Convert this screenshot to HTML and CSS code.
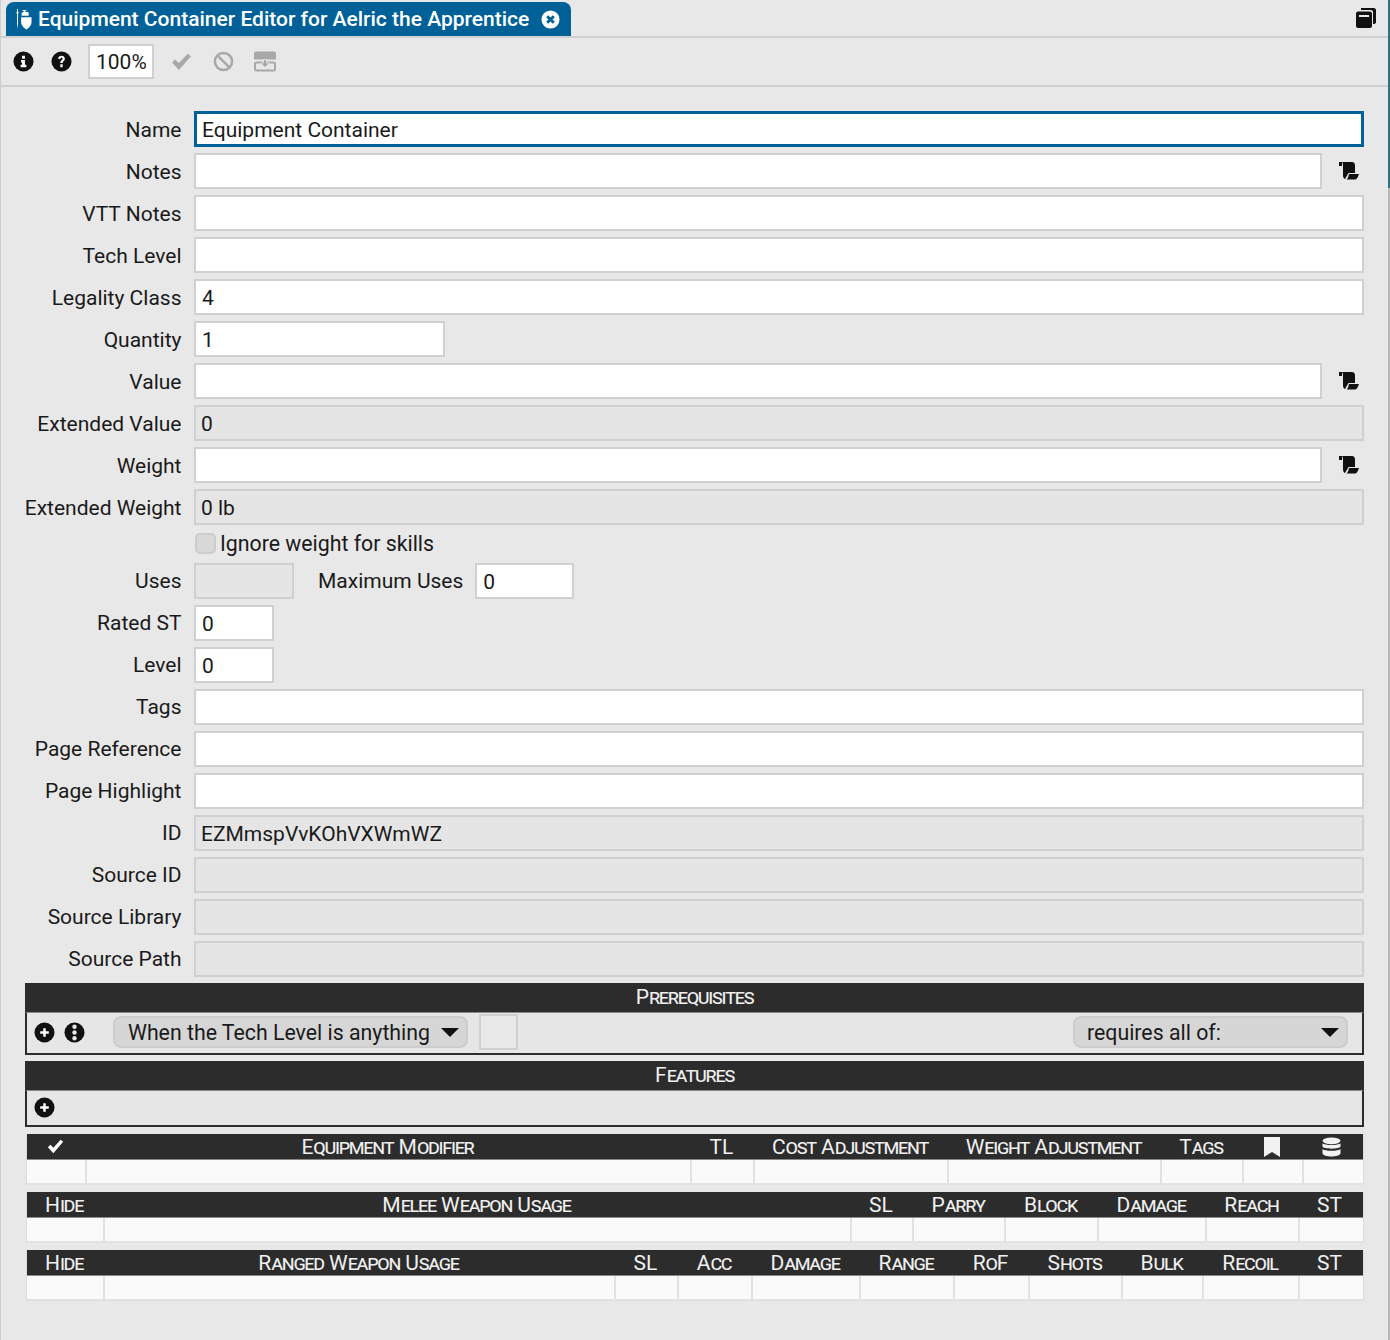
FILE: index.html
```html
<!DOCTYPE html>
<html lang="en">
<head>
    <meta charset="UTF-8">
    <title>Equipment Container Editor</title>
    <link rel="stylesheet" href="styles.css">
</head>
<body>
    <svg class="sprites" width="0" height="0">
        <symbol id="scroll" viewBox="0 0 20 18">
            <path d="M0 0h3v4H0z"/>
            <path d="M3 0h10c2 0 3 1.500 3 3.500V11H9.500L6 17H6.500C4.500 17 4 15 4 13V3C4 1.500 3.500 .5 3 0z"/>
            <path d="M10 12h10l-1 2.500C18.500 16 17.500 17.500 16 17.500H7.500C9 16.500 9.500 14 10 12z"/>
        </symbol>
        <symbol id="plus" viewBox="0 0 22 22">
            <circle cx="11" cy="11" r="10.500"/>
            <path d="M9.700 6.500h2.600v3.200h3.200v2.600h-3.200v3.200H9.700v-3.200H6.500V9.700h3.200z" fill="#fff"/>
        </symbol>
    </svg>

    <div class="edge"></div>

    <div class="tab-bar">
        <div class="tab">
            <svg class="tab-icon" viewBox="0 0 18 22" fill="#fff">
                <path d="M2.200 0h1v3.500h1.300v1H3.200v11l-.5 5.500-.5-5.500v-11H1v-1h1.200z"/>
                <path d="M8 1h4v1h-1.300v1H13c1 0 1.500.5 1.500 1.500V7H7V5c0-1 .5-2 2.300-2V2H8z"/>
                <path d="M6.500 8.500h11v5c0 3.500-2.500 6.500-5.500 8-3-1.500-5.500-4.500-5.500-8z"/>
            </svg>
            <span class="tab-title">Equipment Container Editor for Aelric the Apprentice</span>
            <svg class="tab-close" viewBox="0 0 20 20">
                <circle cx="10" cy="10" r="9.500" fill="#fff"/>
                <path d="M6.500 6.500l7 7m0-7l-7 7" stroke="#006199" stroke-width="3"/>
            </svg>
        </div>
        <svg class="layers" viewBox="0 0 20 20" fill="#111">
            <path d="M5 0h13c1 0 2 1 2 2v12c0 1-1 2-2 2h-1V4c0-1-1-2-2-2H5z"/>
            <path d="M2 3.500h12c1 0 2 1 2 2V18c0 1-1 2-2 2H2c-1 0-2-1-2-2V5.500c0-1 1-2 2-2zM3 7v2h10V7z"/>
        </svg>
    </div>

    <div class="toolbar">
        <svg class="tool-icon" viewBox="0 0 22 22" fill="#111">
            <circle cx="11" cy="11" r="10.500"/>
            <path d="M9.500 5h3v3h-3zM8.500 9.500h4v5H14V17H8v-2.500h1.500V12h-1z" fill="#fff"/>
        </svg>
        <svg class="tool-icon" viewBox="0 0 22 22" fill="#111">
            <circle cx="11" cy="11" r="10.500"/>
            <path d="M7.500 8.500C7.500 6 9 5 11 5s3.500 1 3.500 3.200c0 2.500-2.300 2.500-2.300 4.300H9.800c0-3 2.400-3 2.400-4.300 0-.8-.4-1.200-1.200-1.200s-1.200.5-1.200 1.500zM9.800 14h2.400v3H9.800z" fill="#fff"/>
        </svg>
        <input class="scale-field" value="100%" readonly>
        <svg class="tool-icon dim" viewBox="0 0 20 20" fill="#a8a8a8">
            <path d="M1 11l3-3 3.500 3.500L16 2.500l3 2.500L7.500 18z"/>
        </svg>
        <svg class="tool-icon dim" viewBox="0 0 22 22" fill="none" stroke="#a8a8a8" stroke-width="2.600">
            <circle cx="11" cy="11" r="9"/>
            <path d="M4.800 4.800l12.400 12.400"/>
        </svg>
        <svg class="tool-icon dim wide" viewBox="0 0 22 20">
            <path d="M2 0h18c1 0 2 1 2 2v6H0V2c0-1 1-2 2-2z" fill="#a8a8a8"/>
            <rect x="1" y="11" width="20" height="8" rx="1.500" fill="none" stroke="#a8a8a8" stroke-width="2"/>
            <path d="M9.500 8h3v3.500h3L11 16l-4.500-4.500h3z" fill="#a8a8a8" stroke="#e8e8e8" stroke-width=".8"/>
        </svg>
    </div>

    <div class="form">
        <div class="row"><label class="label">Name</label><input class="field focused" value="Equipment Container"></div>
        <div class="row"><label class="label">Notes</label><input class="field"><svg class="scroll-icon"><use href="#scroll"/></svg></div>
        <div class="row"><label class="label">VTT Notes</label><input class="field"></div>
        <div class="row"><label class="label">Tech Level</label><input class="field"></div>
        <div class="row"><label class="label">Legality Class</label><input class="field" value="4"></div>
        <div class="row"><label class="label">Quantity</label><input class="field qty" value="1"></div>
        <div class="row"><label class="label">Value</label><input class="field"><svg class="scroll-icon"><use href="#scroll"/></svg></div>
        <div class="row"><label class="label">Extended Value</label><input class="field off" value="0" readonly></div>
        <div class="row"><label class="label">Weight</label><input class="field"><svg class="scroll-icon"><use href="#scroll"/></svg></div>
        <div class="row"><label class="label">Extended Weight</label><input class="field off" value="0 lb" readonly></div>
        <div class="row check-row"><span class="label"></span><span class="checkbox"></span><span class="check-text">Ignore weight for skills</span></div>
        <div class="row">
            <label class="label">Uses</label>
            <input class="field off uses" readonly>
            <label class="label-inline">Maximum Uses</label>
            <input class="field uses" value="0">
        </div>
        <div class="row"><label class="label">Rated ST</label><input class="field small" value="0"></div>
        <div class="row"><label class="label">Level</label><input class="field small" value="0"></div>
        <div class="row"><label class="label">Tags</label><input class="field"></div>
        <div class="row"><label class="label">Page Reference</label><input class="field"></div>
        <div class="row"><label class="label">Page Highlight</label><input class="field"></div>
        <div class="row"><label class="label">ID</label><input class="field off" value="EZMmspVvKOhVXWmWZ" readonly></div>
        <div class="row"><label class="label">Source ID</label><input class="field off" readonly></div>
        <div class="row"><label class="label">Source Library</label><input class="field off" readonly></div>
        <div class="row"><label class="label">Source Path</label><input class="field off" readonly></div>
    </div>

    <div class="panel">
        <div class="panel-head">P<span class="lc">rerequisites</span></div>
        <div class="panel-body prereq">
            <svg class="round-icon"><use href="#plus"/></svg>
            <svg class="round-icon" viewBox="0 0 22 22" fill="#111">
                <circle cx="11" cy="11" r="10.500"/>
                <circle cx="11" cy="5" r="2.300" fill="#e8e8e8"/>
                <circle cx="11" cy="11" r="2.300" fill="#e8e8e8"/>
                <circle cx="11" cy="17" r="2.300" fill="#e8e8e8"/>
            </svg>
            <div class="select tech">When the Tech Level is anything<span class="caret"></span></div>
            <div class="empty-box"></div>
            <div class="select all-of">requires all of:<span class="caret"></span></div>
        </div>
    </div>

    <div class="panel">
        <div class="panel-head">F<span class="lc">eatures</span></div>
        <div class="panel-body features">
            <svg class="round-icon"><use href="#plus"/></svg>
        </div>
    </div>

    <div class="table modifiers">
        <div class="th"><svg class="th-check" viewBox="0 0 20 20" fill="#fff"><path d="M1 11l3-3 3.500 3.500L16 2l3 2.500L7.500 18z"/></svg></div>
        <div class="th">E<span class="lc">quipment</span>&nbsp;M<span class="lc">odifier</span></div>
        <div class="th">TL</div>
        <div class="th">C<span class="lc">ost</span>&nbsp;A<span class="lc">djustment</span></div>
        <div class="th">W<span class="lc">eight</span>&nbsp;A<span class="lc">djustment</span></div>
        <div class="th">T<span class="lc">ags</span></div>
        <div class="th"><svg class="th-mark" viewBox="0 0 16 20" fill="#f2f2f2"><path d="M0 0h16v20l-8-5-8 5z"/></svg></div>
        <div class="th"><svg class="th-db" viewBox="0 0 20 20" fill="#f2f2f2"><ellipse cx="10" cy="3.500" rx="9.500" ry="3.500"/><path d="M.5 6c2 2.500 17 2.500 19 0v3.500c-1 3-18 3-19 0zM.5 12c2 2.500 17 2.500 19 0v4.500c-1 4.500-18 4.500-19 0z"/></svg></div>
        <div class="td"></div><div class="td"></div><div class="td"></div><div class="td"></div><div class="td"></div><div class="td"></div><div class="td"></div><div class="td"></div>
    </div>

    <div class="table melee">
        <div class="th">H<span class="lc">ide</span></div>
        <div class="th">M<span class="lc">elee</span>&nbsp;W<span class="lc">eapon</span>&nbsp;U<span class="lc">sage</span></div>
        <div class="th">SL</div>
        <div class="th">P<span class="lc">arry</span></div>
        <div class="th">B<span class="lc">lock</span></div>
        <div class="th">D<span class="lc">amage</span></div>
        <div class="th">R<span class="lc">each</span></div>
        <div class="th">ST</div>
        <div class="td"></div><div class="td"></div><div class="td"></div><div class="td"></div><div class="td"></div><div class="td"></div><div class="td"></div><div class="td"></div>
    </div>

    <div class="table ranged">
        <div class="th">H<span class="lc">ide</span></div>
        <div class="th">R<span class="lc">anged</span>&nbsp;W<span class="lc">eapon</span>&nbsp;U<span class="lc">sage</span></div>
        <div class="th">SL</div>
        <div class="th">A<span class="lc">cc</span></div>
        <div class="th">D<span class="lc">amage</span></div>
        <div class="th">R<span class="lc">ange</span></div>
        <div class="th">R<span class="lc">o</span>F</div>
        <div class="th">S<span class="lc">hots</span></div>
        <div class="th">B<span class="lc">ulk</span></div>
        <div class="th">R<span class="lc">ecoil</span></div>
        <div class="th">ST</div>
        <div class="td"></div><div class="td"></div><div class="td"></div><div class="td"></div><div class="td"></div><div class="td"></div><div class="td"></div><div class="td"></div><div class="td"></div><div class="td"></div><div class="td"></div>
    </div>
</body>
</html>
```

FILE: styles.css
```css
* {
    box-sizing: border-box;
}

body {
    margin: 0;
    height: 1340px;
    overflow: hidden;
    background-color: #e8e8e8;
    border-left: 1px solid #cfcfcf;
    border-right: 2px solid #b8b8b8;
    font-family: Roboto, "Liberation Sans", sans-serif;
    font-size: 21px;
    color: #1a1a1a;
}

.sprites {
    position: absolute;
}

.edge {
    position: absolute;
    top: 0;
    right: 0;
    width: 2px;
    height: 188px;
    background-color: #2f7085;
}

.tab-bar {
    height: 38px;
    padding: 2px 12px 0 5px;
    display: flex;
    justify-content: space-between;
    border-bottom: 2px solid #d0d0d0;
}

.tab {
    width: 565px;
    height: 34px;
    padding: 0 11px 0 9px;
    display: flex;
    align-items: center;
    background-color: #006199;
    border-radius: 8px 8px 0 0;
    color: #fff;
}

.tab-icon {
    width: 17px;
    height: 21px;
    margin-right: 6px;
}

.tab-title {
    font-weight: 500;
    white-space: nowrap;
}

.tab-close {
    width: 19px;
    height: 19px;
    margin-left: auto;
}

.layers {
    width: 20px;
    height: 20px;
    margin-top: 6px;
}

.toolbar {
    height: 49px;
    padding: 0 0 0 12px;
    display: flex;
    align-items: center;
    border-bottom: 2px solid #d0d0d0;
}

.tool-icon {
    width: 21px;
    height: 21px;
    margin-right: 17px;
}

.tool-icon.dim {
    margin-right: 21px;
}

.tool-icon.wide {
    width: 22px;
    margin-left: -1px;
}

.scale-field {
    width: 66px;
    height: 35px;
    margin-right: 17px;
    margin-left: -1px;
    padding: 0 6px;
    border: 2px solid #d0d0d0;
    background-color: #fff;
    font: inherit;
    color: inherit;
    outline: none;
}

.form {
    padding: 24px 24px 0 0;
    display: flex;
    flex-direction: column;
    gap: 6px;
}

.row {
    height: 36px;
    display: flex;
    align-items: center;
}

.label {
    width: 180.500px;
    margin-right: 12.500px;
    flex-shrink: 0;
    text-align: right;
}

/* the rows above the checkbox sit a pixel lower in their boxes */
.row:nth-child(-n+10) .label {
    padding-top: 2px;
}

.label-inline {
    margin: 0 12px 0 24px;
}

.field {
    flex: 1;
    min-width: 0;
    height: 36px;
    padding: 2px 6px 0;
    border: 2px solid #d0d0d0;
    background-color: #fff;
    font: inherit;
    color: inherit;
    outline: none;
}

.field.focused {
    border: 3px solid #006199;
    padding: 2px 5px 0;
}

.field.off {
    background-color: #e5e5e5;
    padding: 2px 5px 0;
}

.field.qty {
    flex: none;
    width: 251px;
}

.field.uses {
    flex: none;
    width: 99px;
}

.field.off.uses {
    width: 100px;
}

.field.small {
    flex: none;
    width: 80px;
}

.scroll-icon {
    width: 20px;
    height: 18px;
    margin: 0 5px 0 17px;
    flex-shrink: 0;
    fill: #111;
}

.check-row {
    height: 26px;
}

.check-text {
    margin-bottom: 2px;
    font-size: 21.300px;
}

.checkbox {
    width: 21px;
    height: 21px;
    margin: 0 4px 2px 1px;
    background-color: #d8d8d8;
    border: 2px solid #cdcdcd;
    border-radius: 5px;
}

.panel {
    margin: 6px 24px 0 24px;
}

.panel-head {
    height: 29px;
    background-color: #2c2c2c;
    color: #f0f0f0;
    text-align: center;
    font-variant: small-caps;
    line-height: 29px;
}

.lc {
    letter-spacing: -1.300px;
}

.panel-body {
    display: flex;
    align-items: center;
    border: 2px solid #2c2c2c;
    border-top: 1px solid #8a8a8a;
    background-color: #e6e6e6;
    padding: 0 0 2px 7px;
}

.prereq {
    height: 43px;
}

.features {
    height: 37px;
}

.round-icon {
    width: 21px;
    height: 21px;
    margin-right: 9px;
    fill: #111;
}

.select {
    height: 32px;
    padding: 0 7px 0 13px;
    display: flex;
    align-items: center;
    justify-content: space-between;
    background-color: #d6d6d6;
    border: 2px solid #cdcdcd;
    border-radius: 8px;
    font-size: 21.300px;
}

.select.tech {
    width: 355px;
    margin-left: 19px;
}

.select.all-of {
    width: 275px;
    margin-left: auto;
    margin-right: 14px;
    padding-left: 12px;
}

.caret {
    width: 0;
    height: 0;
    border-left: 9px solid transparent;
    border-right: 9px solid transparent;
    border-top: 9px solid #111;
}

.empty-box {
    width: 39px;
    height: 36px;
    margin-left: 11px;
    border: 2px solid #d0d0d0;
    background-color: #e8e8e8;
}

.table {
    margin: 7px 24px 0 25px;
    display: grid;
    grid-template-rows: 26px 25px;
    border-left: 1px solid #dcdcdc;
    border-right: 1px solid #dcdcdc;
}

.modifiers {
    grid-template-columns: 60px 605px 63px 194px 213px 82px 60px 1fr;
}

.melee {
    grid-template-columns: 78px 747px 62px 92px 93px 108px 93px 1fr;
}

.ranged {
    grid-template-columns: 78px 511px 63px 74px 108px 94px 75px 93px 81px 96px 1fr;
}

.th {
    padding-right: 4px;
    display: flex;
    align-items: center;
    justify-content: center;
    background-color: #2c2c2c;
    border-bottom: 1px solid #8a8a8a;
    color: #f0f0f0;
    font-variant: small-caps;
    white-space: nowrap;
}

.td {
    background-color: #fafafa;
    border-right: 2px solid #e2e2e2;
    border-bottom: 2px solid #e2e2e2;
}

.td:last-child {
    border-right: 0;
}

.th-check {
    width: 17px;
    height: 17px;
}

.th-mark {
    width: 16px;
    height: 20px;
}

.th-db {
    width: 19px;
    height: 20px;
}
```
